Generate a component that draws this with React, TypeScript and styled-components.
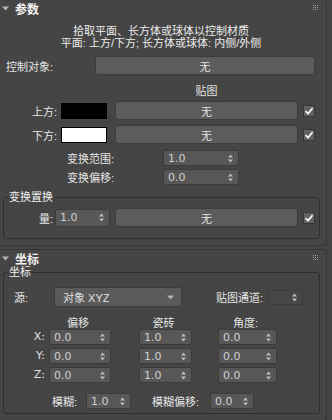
import styled, { createGlobalStyle } from "styled-components";

const GlobalStyle = createGlobalStyle`
  body {
    margin: 0;
    background: #454545;
    font-family: "Liberation Sans", "Noto Sans CJK SC", sans-serif;
    font-size: 11px;
    color: #e2e2e2;
  }
`;

const Page = styled.div`
  width: 332px;
  height: 420px;
  overflow: hidden;
  display: flex;
  flex-direction: column;
  gap: 3px;
`;

const Rollout = styled.div<{ $first?: boolean }>`
  box-sizing: border-box;
  width: 327px;
  flex-shrink: 0;
  border: 1px solid #353535;
  border-left: none;
  border-top: ${(p) => (p.$first ? "none" : "1px solid #353535")};
  border-radius: 0 3px 3px 0;
  padding-bottom: 6px;
`;

const Header = styled.div`
  height: 16px;
  display: flex;
  align-items: center;
  padding-left: 2px;
  padding-right: 7px;
`;

const Title = styled.span`
  font-family: "Noto Sans CJK SC", sans-serif;
  font-weight: bold;
  font-size: 12px;
  color: #f2f2f2;
  margin-left: 6px;
  flex: 1;
`;

const Desc = styled.div`
  margin-top: 9px;
  width: 322px;
  text-align: center;
  line-height: 12px;
  color: #ececec;
`;

const Row = styled.div<{ $top?: number; $h?: number; $pl?: number }>`
  display: flex;
  align-items: center;
  margin-top: ${(p) => p.$top ?? 0}px;
  height: ${(p) => p.$h ?? 19}px;
  padding-left: ${(p) => p.$pl ?? 0}px;
`;

const GroupSlot = styled.div`
  margin-top: 6px;
`;

const Label = styled.span<{ $w: number; $right?: boolean; $ml?: number }>`
  flex-shrink: 0;
  width: ${(p) => p.$w}px;
  margin-left: ${(p) => p.$ml ?? 0}px;
  text-align: ${(p) => (p.$right ? "right" : "left")};
  white-space: nowrap;
  color: #e6e6e6;
`;

const Button = styled.div<{ $w: number; $ml?: number }>`
  box-sizing: border-box;
  flex-shrink: 0;
  width: ${(p) => p.$w}px;
  height: 19px;
  margin-left: ${(p) => p.$ml ?? 0}px;
  background: #5c5c5c;
  border: 1px solid #3c3c3c;
  border-radius: 3px;
  display: flex;
  align-items: center;
  justify-content: center;
  color: #e4e4e4;
`;

const MapTitle = styled.div`
  margin-top: 10px;
  line-height: 12px;
  width: 183px;
  margin-left: 115px;
  text-align: center;
`;

const Swatch = styled.div<{ $color: string }>`
  box-sizing: border-box;
  width: 46px;
  height: 16px;
  margin-left: 4px;
  background: ${(p) => p.$color};
  border: 1px solid #000;
`;

const CheckBox = styled.div`
  box-sizing: border-box;
  width: 12px;
  height: 12px;
  margin-left: 5px;
  background: #626262;
  border: 1px solid #363636;
  display: flex;
  align-items: center;
  justify-content: center;
`;

const SpinnerBox = styled.div<{ $w: number; $h?: number; $ml?: number; $off?: boolean }>`
  box-sizing: border-box;
  flex-shrink: 0;
  width: ${(p) => p.$w}px;
  height: ${(p) => p.$h ?? 16}px;
  margin-left: ${(p) => p.$ml ?? 0}px;
  background: ${(p) => (p.$off ? "#474747" : "#575757")};
  border: 1px solid #3b3b3b;
  border-radius: 2px;
  display: flex;
  align-items: center;
  padding: 0 5px 0 4px;
  color: #cfcfcf;
  font-family: "DejaVu Sans", sans-serif;
  font-size: 11px;
`;

const SpinValue = styled.span`
  flex: 1;
`;

const Group = styled.fieldset<{ $pt: number; $pb: number }>`
  box-sizing: border-box;
  width: 317px;
  margin: 0 0 0 3px;
  padding: ${(p) => p.$pt}px 0 ${(p) => p.$pb}px 0;
  border: 1px solid #2f2f2f;
  border-radius: 3px;
  min-width: 0;
`;

const Legend = styled.legend`
  margin-left: 4px;
  padding: 0 1px;
  line-height: 12px;
  font-size: 11px;
  color: #f0f0f0;
`;

const Dropdown = styled.div`
  box-sizing: border-box;
  width: 128px;
  height: 20px;
  background: #5a5a5a;
  border: 1px solid #3b3b3b;
  border-radius: 2px;
  display: flex;
  align-items: center;
  padding: 0 7px 0 8px;
  color: #e0e0e0;
`;

const Grid = styled.div`
  display: flex;
  margin-top: 10px;
`;

const Column = styled.div<{ $w: number; $ml: number }>`
  display: flex;
  flex-direction: column;
  gap: 3px;
  width: ${(p) => p.$w}px;
  margin-left: ${(p) => p.$ml}px;
`;

const ColHead = styled.div`
  height: 12px;
  line-height: 12px;
  margin-bottom: -3px;
  text-align: center;
  padding-right: 4px;
`;

const AxisLabel = styled.div`
  height: 16px;
  line-height: 16px;
  text-align: right;
  font-family: "DejaVu Sans", sans-serif;
`;

const Grip = () => (
  <svg width="6" height="6" viewBox="0 0 6 6">
    {[0, 2, 4].map((y) =>
      [0, 2, 4].map((x) => (
        <rect key={`${x}-${y}`} x={x} y={y} width="1" height="1" fill="#9a9a9a" />
      ))
    )}
  </svg>
);

const Caret = () => (
  <svg width="7" height="5" viewBox="0 0 7 5">
    <path d="M0 0.5 L7 0.5 L3.5 4.5 Z" fill="#b4b4b4" />
  </svg>
);

const Arrows = () => (
  <svg width="5" height="9" viewBox="0 0 5 9">
    <path d="M0 3.5 L2.5 0.5 L5 3.5 Z" fill="#bdbdbd" />
    <path d="M0 5.5 L5 5.5 L2.5 8.5 Z" fill="#bdbdbd" />
  </svg>
);

const Check = () => (
  <svg width="10" height="10" viewBox="0 0 10 10">
    <path d="M1.5 5.2 L4 7.6 L8.6 2.2" stroke="#f2f2f2" strokeWidth="1.8" fill="none" />
  </svg>
);

function Spinner(props: { w: number; h?: number; ml?: number; value?: string; off?: boolean }) {
  return (
    <SpinnerBox $w={props.w} $h={props.h} $ml={props.ml} $off={props.off}>
      <SpinValue>{props.value}</SpinValue>
      <Arrows />
    </SpinnerBox>
  );
}

const columns = [
  { head: "偏移", w: 62, ml: 4, values: ["0.0", "0.0", "0.0"] },
  { head: "瓷砖", w: 53, ml: 28, values: ["1.0", "1.0", "1.0"] },
  { head: "角度:", w: 59, ml: 26, values: ["0.0", "0.0", "0.0"] },
];

export default function App() {
  return (
    <>
      <GlobalStyle />
      <Page>
        <Rollout $first>
          <Header>
            <Caret />
            <Title>参数</Title>
            <Grip />
          </Header>
          <Desc>
            拾取平面、长方体或球体以控制材质
            <br />
            平面: 上方/下方; 长方体或球体: 内侧/外侧
          </Desc>
          <Row $top={7} $pl={6}>
            <Label $w={89}>控制对象:</Label>
            <Button $w={220}>无</Button>
          </Row>
          <MapTitle>贴图</MapTitle>
          <Row $top={4}>
            <Label $w={57} $right>上方:</Label>
            <Swatch $color="#000" />
            <Button $w={183} $ml={8}>无</Button>
            <CheckBox><Check /></CheckBox>
          </Row>
          <Row $top={5}>
            <Label $w={57} $right>下方:</Label>
            <Swatch $color="#fff" />
            <Button $w={183} $ml={8}>无</Button>
            <CheckBox><Check /></CheckBox>
          </Row>
          <Row $top={6} $h={16} $pl={67}>
            <Label $w={96}>变换范围:</Label>
            <Spinner w={76} value="1.0" />
          </Row>
          <Row $top={3} $h={16} $pl={67}>
            <Label $w={96}>变换偏移:</Label>
            <Spinner w={76} value="0.0" />
          </Row>
          <GroupSlot>
            <Group $pt={5} $pb={11}>
              <Legend>变换置换</Legend>
              <Row>
                <Label $w={49} $right>量:</Label>
                <Spinner w={55} h={18} ml={2} value="1.0" />
                <Button $w={183} $ml={5}>无</Button>
                <CheckBox><Check /></CheckBox>
              </Row>
            </Group>
          </GroupSlot>
        </Rollout>
        <Rollout>
          <Header>
            <Caret />
            <Title>坐标</Title>
            <Grip />
          </Header>
          <Group $pt={9} $pb={4}>
            <Legend>坐标</Legend>
            <Row $h={20} $pl={10}>
              <Label $w={40}>源:</Label>
              <Dropdown>
                <SpinValue>对象 XYZ</SpinValue>
                <Caret />
              </Dropdown>
              <Label $w={52} $ml={34}>贴图通道:</Label>
              <Spinner w={35} h={15} off />
            </Row>
            <Grid>
              <Column $w={41} $ml={0}>
                <ColHead />
                <AxisLabel>X:</AxisLabel>
                <AxisLabel>Y:</AxisLabel>
                <AxisLabel>Z:</AxisLabel>
              </Column>
              {columns.map((c) => (
                <Column key={c.head} $w={c.w} $ml={c.ml}>
                  <ColHead>{c.head}</ColHead>
                  {c.values.map((v, i) => (
                    <Spinner key={i} w={c.w} value={v} />
                  ))}
                </Column>
              ))}
            </Grid>
            <Row $top={10} $h={16} $pl={48}>
              <Label $w={34}>模糊:</Label>
              <Spinner w={45} value="1.0" />
              <Label $w={58} $ml={21}>模糊偏移:</Label>
              <Spinner w={44} value="0.0" />
            </Row>
          </Group>
        </Rollout>
      </Page>
    </>
  );
}
